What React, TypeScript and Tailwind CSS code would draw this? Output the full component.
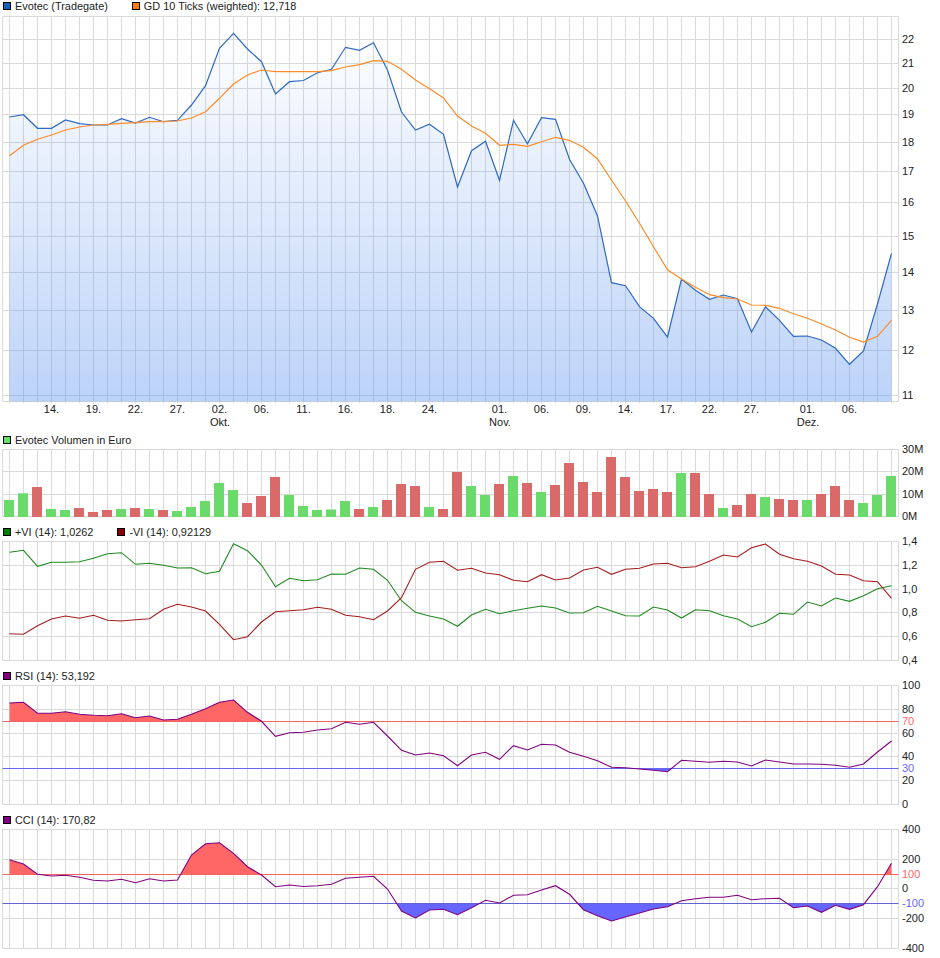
const X0 = 9.5;
const STEP = 14;
const xs = Array.from({ length: 64 }, (_, i) => X0 + STEP * i);
const LEFT = 2.5;
const RIGHT = 898.5;
const GRID = "#d9d9d9";

const pricePts = [117,114.7,128.3,128.3,120,123.7,125,125,118.7,123,117.3,121.7,120.3,105,85.7,48.3,33.3,49,61.7,94,81.7,80.5,72.7,69.3,47.3,50.3,42.7,70,112,130,124.3,134.3,187,150.7,141.3,180.3,120.3,143.7,117.7,119.3,159.3,183.3,216,282.7,285.7,306.7,318.3,337,279,290.3,299.3,295,298.7,332,306.7,320.3,336.3,336,340,348.3,364.3,351,304,253.3];
const gdPts = [155.7,145.3,139.3,135,130,127,125,124.3,123.3,122.7,121.7,121.7,121,118,111.7,98.3,84,75,70,71.7,71.7,71.5,71.7,70.7,67,64.7,60.7,61.3,69.3,80,88.7,98,116,126,133.3,145.3,144.3,146.3,141.7,137.3,140.3,147.3,159,180,201,223.3,246.7,269.7,279,287.3,294.7,297.7,299,305,305.3,308.3,313.7,318.3,324,330,337.3,342,336.3,320.3];
const vols: [number, "g" | "r"][] = [[500,"g"],[493.3,"g"],[487,"r"],[509,"g"],[510,"g"],[508,"r"],[512,"r"],[510,"r"],[509,"g"],[508,"r"],[509,"g"],[510,"r"],[511,"g"],[507,"g"],[501,"g"],[483,"g"],[490,"g"],[503,"r"],[496,"r"],[477,"r"],[495,"g"],[506,"g"],[510,"g"],[509.5,"g"],[501,"g"],[509,"r"],[507,"g"],[500,"r"],[484,"r"],[486,"r"],[507,"g"],[509,"r"],[472,"r"],[486,"g"],[495,"g"],[484,"r"],[476,"g"],[483,"r"],[492,"g"],[485,"r"],[463,"r"],[482,"r"],[492,"r"],[457,"r"],[477,"r"],[491,"r"],[489,"r"],[492,"r"],[473,"g"],[473,"r"],[494,"r"],[508,"g"],[505,"r"],[494,"r"],[497,"g"],[499,"r"],[500,"r"],[500,"g"],[494,"r"],[486,"r"],[500,"r"],[503,"g"],[495,"g"],[476,"g"]];
const viPlus = [552.3,550.3,566.3,562.3,562.3,561.7,558.3,553.7,552.7,564.3,563.3,565.3,568,567.7,573.7,571.3,543.7,550.7,565,586.7,578.3,580.7,579.7,574,574.3,568,569.3,580.3,600.7,612.3,616,619,626.3,615,609.3,613.7,610.7,608.3,606,608,613,612.7,606.3,611,615.7,616,607,610,618,609.7,610.7,615.7,619,626.7,622.3,613.3,614.3,602,606,598,601.3,595.7,588.7,585.7];
const viMinus = [633.7,634.3,625.7,619,616,618.3,615.3,620.3,621,619.7,618.7,609.3,604.3,607,611,624.3,639.7,636.7,622,611.7,610.7,609.7,607.3,609.3,615.3,616.7,619.7,611,597.7,569.3,562.3,561.3,570.3,568.3,573,574.7,580.3,581.7,574.7,580,578,570,567.3,574.3,569.3,568.3,564,563.3,567.7,566.7,561.3,555,557,547.7,544,554.3,558.7,561.3,566,574.3,575,580.7,581.7,598.3];
const rsi = [703,702.3,713.3,713.3,711.7,714.3,715.3,715.7,713.7,717.7,716,720,719.3,714.3,708.7,702.3,700,712.3,721.3,736.3,732.7,732.3,730,728.7,722.3,724.3,722.3,736,750.3,755,753,755.7,765.7,755,752.3,759.3,745.7,750,744.3,745,752.3,756.3,760.7,767.3,767.7,769,770.3,771.7,760.3,761.3,762.3,761.3,762,766,760,762,764,764,764.3,765.3,767.3,764,752,741];
const cci = [859.7,864,874.3,876,875.3,877.3,880.3,881,879.3,882.7,878.7,881,880,855,843.7,842.7,853.3,866.7,875,886.7,885,886.5,885.7,884.3,878.3,877.3,876.3,889,911,918,910,909.3,914.7,907.7,900.3,903,895.3,894.7,890,885.7,894.3,909.7,915.7,921,917,913,909,906.7,900.7,898.7,897.3,897.3,895.3,899.7,898.7,898.3,907.7,906,912.3,905.3,909.3,904.7,886.7,863.3];

const xTicks: [number, string][] = [[3,"14."],[6,"19."],[9,"22."],[12,"27."],[15,"02."],[18,"06."],[21,"11."],[24,"16."],[27,"18."],[30,"24."],[35,"01."],[38,"06."],[41,"09."],[44,"14."],[47,"17."],[50,"22."],[53,"27."],[57,"01."],[60,"06."]];
const months: [number, string][] = [[15,"Okt."],[35,"Nov."],[57,"Dez."]];

const line = (pts: number[]) => pts.map((y, i) => `${i ? "L" : "M"}${xs[i]} ${y}`).join(" ");
const toThreshold = (pts: number[], t: number) => `M${xs[0]} ${t} ${pts.map((y, i) => `L${xs[i]} ${y}`).join(" ")} L${xs[63]} ${t} Z`;

function Grid({ top, bottom, rows }: { top: number; bottom: number; rows: number[] }) {
  return (
    <g stroke={GRID} strokeWidth="1">
      {[LEFT, ...xs, RIGHT].map((x) => (
        <line key={x} x1={x} x2={x} y1={top} y2={bottom} />
      ))}
      {rows.map((y) => (
        <line key={y} x1={LEFT} x2={RIGHT} y1={y} y2={y} />
      ))}
    </g>
  );
}

function YLabels({ items }: { items: [number, string, string?][] }) {
  return (
    <g fontSize="11" fill="#222222">
      {items.map(([y, t, c]) => (
        <text key={t} x="902" y={y + 4} fill={c}>
          {t}
        </text>
      ))}
    </g>
  );
}

function Legend({ items }: { items: [string, string][] }) {
  return (
    <div className="flex h-3 items-center gap-[24px] pl-[3px] text-[10.9px] leading-none text-[#222222]">
      {items.map(([color, text]) => (
        <div key={text} className="flex items-center gap-1">
          <span className="box-border block h-2 w-2 border border-black" style={{ backgroundColor: color }} />
          <span className="whitespace-pre">{text}</span>
        </div>
      ))}
    </div>
  );
}

function Plot({ top, height, children }: { top: number; height: number; children: React.ReactNode }) {
  return (
    <svg
      width={940}
      height={height}
      viewBox={`0 ${top} 940 ${height}`}
      className="block overflow-visible"
      fontFamily="'Liberation Sans', Arial, sans-serif"
    >
      {children}
    </svg>
  );
}

function Oscillator({
  id,
  pts,
  hi,
  lo,
  top,
  bottom,
  rows,
  labels,
  loColor,
}: {
  id: string;
  pts: number[];
  hi: number;
  lo: number;
  top: number;
  bottom: number;
  rows: number[];
  labels: [number, string, string?][];
  loColor: string;
}) {
  return (
    <>
      <Grid top={top} bottom={bottom} rows={rows} />
      <defs>
        <clipPath id={`${id}-hi`}>
          <rect x={0} y={top} width={900} height={hi - top} />
        </clipPath>
        <clipPath id={`${id}-lo`}>
          <rect x={0} y={lo} width={900} height={bottom - lo} />
        </clipPath>
      </defs>
      <path d={toThreshold(pts, hi)} fill="#ff6666" clipPath={`url(#${id}-hi)`} />
      <path d={toThreshold(pts, lo)} fill="#6666ff" clipPath={`url(#${id}-lo)`} />
      <line x1={LEFT} x2={RIGHT} y1={hi} y2={hi} stroke="#f06464" />
      <line x1={LEFT} x2={RIGHT} y1={lo} y2={lo} stroke={loColor} />
      <path d={line(pts)} fill="none" stroke="#800080" strokeWidth="1.1" />
      <YLabels items={labels} />
    </>
  );
}

export default function App() {
  return (
    <div className="w-[940px] bg-white font-['Liberation_Sans',Arial,sans-serif]">
      <Legend items={[["#1a5fb4", "Evotec (Tradegate)"], ["#ff7f00", "GD 10 Ticks (weighted): 12,718"]]} />
      <Plot top={12} height={422}>
        <defs>
          <linearGradient id="area" gradientUnits="userSpaceOnUse" x1="0" x2="0" y1="30" y2="401.5">
            <stop offset="0" stopColor="#5b93ef" stopOpacity="0" />
            <stop offset="1" stopColor="#5b93ef" stopOpacity="0.41" />
          </linearGradient>
        </defs>
        <Grid top={16.5} bottom={401.5} rows={[16.5, 39.5, 63.5, 88.5, 114.5, 142.5, 171.5, 202.5, 236.5, 272.5, 310.5, 350.5, 395.5, 401.5]} />
        <g stroke="#e6e6e6">
          {xs.map((x) => (
            <line key={x} x1={x} x2={x} y1={402} y2={404} />
          ))}
        </g>
        <path d={`${line(pricePts)} L${xs[63]} 401.5 L${xs[0]} 401.5 Z`} fill="url(#area)" />
        <path d={line(pricePts)} fill="none" stroke="#2f69c4" strokeWidth="1.2" />
        <path d={line(gdPts)} fill="none" stroke="#ff8a26" strokeWidth="1.2" />
        <YLabels items={[[39,"22"],[63,"21"],[88,"20"],[114,"19"],[142,"18"],[171,"17"],[202,"16"],[236,"15"],[272,"14"],[310,"13"],[350,"12"],[395,"11"]]} />
        <g fontSize="11" fill="#222222" textAnchor="middle">
          {xTicks.map(([i, t]) => (
            <text key={i} x={xs[i]} y={413}>{t}</text>
          ))}
          {months.map(([i, t]) => (
            <text key={t} x={xs[i] + 0.5} y={426}>{t}</text>
          ))}
        </g>
      </Plot>

      <Legend items={[["#66dd66", "Evotec Volumen in Euro"]]} />
      <Plot top={446} height={80}>
        <Grid top={449.5} bottom={516.5} rows={[449.5, 471.5, 494.5, 516.5]} />
        {vols.map(([y, c], i) => (
          <rect key={i} x={xs[i] - 5.5} y={y} width={10} height={517 - y} fill={c === "g" ? "#6ada6a" : "#da6a6a"} />
        ))}
        <YLabels items={[[449,"30M"],[471,"20M"],[494,"10M"],[516,"0M"]]} />
      </Plot>

      <Legend items={[["#007f00", "+VI (14): 1,0262"], ["#8b0000", "-VI (14): 0,92129"]]} />
      <Plot top={538} height={132}>
        <Grid top={541.5} bottom={660.5} rows={[541.5, 565.5, 589.5, 612.5, 636.5, 660.5]} />
        <path d={line(viPlus)} fill="none" stroke="#1f8a1f" strokeWidth="1.1" />
        <path d={line(viMinus)} fill="none" stroke="#a81c1c" strokeWidth="1.1" />
        <YLabels items={[[541,"1,4"],[565,"1,2"],[589,"1,0"],[612,"0,8"],[636,"0,6"],[660,"0,4"]]} />
      </Plot>

      <Legend items={[["#800080", "RSI (14): 53,192"]]} />
      <Plot top={682} height={132}>
        <Oscillator
          id="rsi"
          pts={rsi}
          hi={721.5}
          lo={768.5}
          top={685.5}
          bottom={804.5}
          rows={[685.5, 709.5, 733.5, 756.5, 780.5, 804.5]}
          loColor="#6666f5"
          labels={[[685,"100"],[709,"80"],[721,"70","#ff6666"],[733,"60"],[756,"40"],[768,"30","#6666ff"],[780,"20"],[804,"0"]]}
        />
      </Plot>

      <Legend items={[["#800080", "CCI (14): 170,82"]]} />
      <Plot top={826} height={132}>
        <Oscillator
          id="cci"
          pts={cci}
          hi={874.5}
          lo={903.5}
          top={829.5}
          bottom={948.5}
          rows={[829.5, 859.5, 888.5, 918.5, 948.5]}
          loColor="#6262d2"
          labels={[[829,"400"],[859,"200"],[874,"100","#ff6666"],[888,"0"],[903,"-100","#6666ff"],[918,"-200"],[948,"-400"]]}
        />
      </Plot>
    </div>
  );
}
